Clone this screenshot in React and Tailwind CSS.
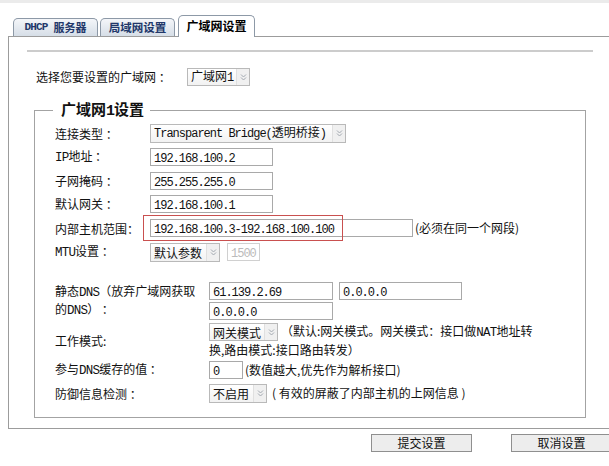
import React from "react";

const M = ({ children, className = "" }) => (
  <span className={`font-['Liberation_Mono',monospace] text-[12px] tracking-[-1px] ${className}`}>{children}</span>
);

const L = ({ children }) => (
  <span className="font-['Liberation_Mono',monospace] text-[12.5px] tracking-[-0.8px]">{children}</span>
);

const Arrow = () => (
  <span className="flex h-full w-[13px] shrink-0 items-center justify-center border-l border-[#e0e0e0] bg-[#f0f0f0]">
    <svg width="7" height="7" viewBox="0 0 7 7">
      <path d="M1 0.5 L3.5 3 L6 0.5 M1 3.5 L3.5 6 L6 3.5" stroke="#a3a9b1" fill="none" strokeWidth="1" />
    </svg>
  </span>
);

const Select = ({ w, h = "h-[19px]", children }) => (
  <div className={`flex shrink-0 items-center border border-[#b9b9b9] bg-gradient-to-b from-white to-[#f2f2f2] ${w} ${h}`}>
    <div className="flex-1 overflow-hidden whitespace-nowrap pl-[3px] leading-[17px]">{children}</div>
    <Arrow />
  </div>
);

const Input = ({ w, children, disabled }) => (
  <div
    className={`h-[18px] shrink-0 border bg-white pl-[3px] leading-[16px] ${w} ${
      disabled ? "border-[#d0d0d0] text-[#bbbbbb]" : "border-[#a9a9a9]"
    }`}
  >
    <M>{children}</M>
  </div>
);

const Row = ({ h, label, lw, children, className = "" }) => (
  <div className={`flex items-center ${h} ${className}`}>
    <div className={`shrink-0 leading-[15px] ${lw}`}>{label}</div>
    {children}
  </div>
);

export default function App() {
  return (
    <div className="relative h-[466px] w-[609px] overflow-hidden bg-white text-[12px] text-[#111111] font-['Noto_Sans_CJK_SC',sans-serif]">
      <div className="h-[3px] bg-[#ebebeb]" />

      {/* tabs */}
      <div className="flex h-[33px] items-end pl-[13px]">
        <div className="flex h-[18px] w-[85px] items-center justify-center rounded-t-[5px] border border-b-0 border-[#8d99a7] bg-gradient-to-b from-[#f4f6f9] to-[#d6dee7] text-[11px] font-bold text-[#22386a]">
          <span className="font-['Liberation_Mono',monospace] text-[11px] font-bold tracking-[-0.8px]">DHCP</span>
          <span className="ml-[6px]">服务器</span>
        </div>
        <div className="ml-[2px] flex h-[18px] w-[75px] items-center justify-center rounded-t-[5px] border border-b-0 border-[#8d99a7] bg-gradient-to-b from-[#f4f6f9] to-[#d6dee7] text-[11.5px] font-bold text-[#22386a]">
          局域网设置
        </div>
        <div className="relative z-10 -mb-px ml-[3px] flex h-[22px] w-[77px] items-center justify-center rounded-t-[5px] border border-b-0 border-[#8d99a7] bg-white pb-[1px] text-[12px] font-bold text-black">
          广域网设置
        </div>
      </div>

      {/* panel */}
      <div className="ml-[8px] h-[393px] w-[640px] border border-[#9c9c9c]">
        <div className="ml-[18px] mt-[13px] h-0 w-[566px] border-t-2 border-[#cccccc]" />

        <div className="ml-[27px] mt-[16px] flex h-[18px] items-center">
          <div className="w-[151px] shrink-0">选择您要设置的广域网 ：</div>
          <Select w="w-[63px]" h="h-[18px]">
            广域网<M>1</M>
          </Select>
        </div>

        <fieldset className="ml-[25px] mt-[14px] h-[318px] w-[552px] border border-[#a3a3a3]">
          <legend className="ml-[18px] pl-[8px] pr-[6px] text-[15px] font-bold leading-[18px]">
            广域网<span className="font-['Liberation_Mono',monospace] text-[15px] tracking-[-1px]">1</span>设置
          </legend>

          <div className="pl-[20px]">
            <Row h="h-[24px]" lw="w-[95px]" label="连接类型 ：">
              <Select w="w-[196px]">
                <M>Transparent Bridge(</M>透明桥接<M>)</M>
              </Select>
            </Row>
            <Row h="h-[24px]" lw="w-[95px]" label={<><L>IP</L>地址 ：</>}>
              <Input w="w-[123px]">192.168.100.2</Input>
            </Row>
            <Row h="h-[23px]" lw="w-[95px]" label="子网掩码 ：">
              <Input w="w-[123px]">255.255.255.0</Input>
            </Row>
            <Row h="h-[23px]" lw="w-[95px]" label="默认网关 ：">
              <Input w="w-[123px]">192.168.100.1</Input>
            </Row>
            <Row h="h-[26px]" lw="w-[95px]" label="内部主机范围：" className="relative">
              <Input w="w-[263px]">192.168.100.3-192.168.100.100</Input>
              <span className="ml-[2px] whitespace-nowrap">(必须在同一个网段)</span>
              <div className="absolute left-[88px] top-0 h-[26px] w-[200px] border border-[#c9504f]" />
            </Row>
            <Row h="h-[22px]" lw="w-[95px]" label={<><L>MTU</L>设置 ：</>}>
              <Select w="w-[70px]">默认参数</Select>
              <div className="ml-[7px]">
                <Input w="w-[33px]" disabled>1500</Input>
              </div>
            </Row>

            <div className="h-[17px]" />

            <Row
              h="h-[42px]"
              lw="w-[154px]"
              label={
                <>
                  静态<L>DNS</L>（放弃广域网获取
                  <br />
                  的<L>DNS</L>） ：
                </>
              }
            >
              <div className="flex flex-col gap-[2px]">
                <div className="flex gap-[6px]">
                  <Input w="w-[124px]">61.139.2.69</Input>
                  <Input w="w-[123px]">0.0.0.0</Input>
                </div>
                <Input w="w-[124px]">0.0.0.0</Input>
              </div>
            </Row>

            <Row h="h-[37px]" lw="w-[154px]" label="工作模式:">
              <div className="flex flex-col">
                <div className="flex h-[18px] items-center whitespace-nowrap">
                  <Select w="w-[69px]" h="h-[18px]">网关模式</Select>
                  <span className="ml-[3px]">（默认:网关模式。网关模式：接口做<L>NAT</L>地址转</span>
                </div>
                <div className="h-[17px] whitespace-nowrap leading-[17px]">换,路由模式:接口路由转发）</div>
              </div>
            </Row>

            <Row h="h-[22px]" lw="w-[154px]" label={<>参与<L>DNS</L>缓存的值 ：</>}>
              <Input w="w-[34px]">0</Input>
              <span className="ml-[2px] whitespace-nowrap">(数值越大,优先作为解析接口)</span>
            </Row>

            <Row h="h-[24px]" lw="w-[154px]" label="防御信息检测 ：">
              <Select w="w-[58px]">不启用</Select>
              <span className="ml-[5px] whitespace-nowrap">( 有效的屏蔽了内部主机的上网信息 )</span>
            </Row>
          </div>
        </fieldset>
      </div>

      <div className="mt-[5px] flex gap-[39px] pl-[371px]">
        <div className="h-[18px] w-[101px] shrink-0 border border-[#8f8f8f] bg-[#ededed] text-center leading-[16px]">提交设置</div>
        <div className="h-[18px] w-[101px] shrink-0 border border-[#8f8f8f] bg-[#ededed] text-center leading-[16px]">取消设置</div>
      </div>
    </div>
  );
}
